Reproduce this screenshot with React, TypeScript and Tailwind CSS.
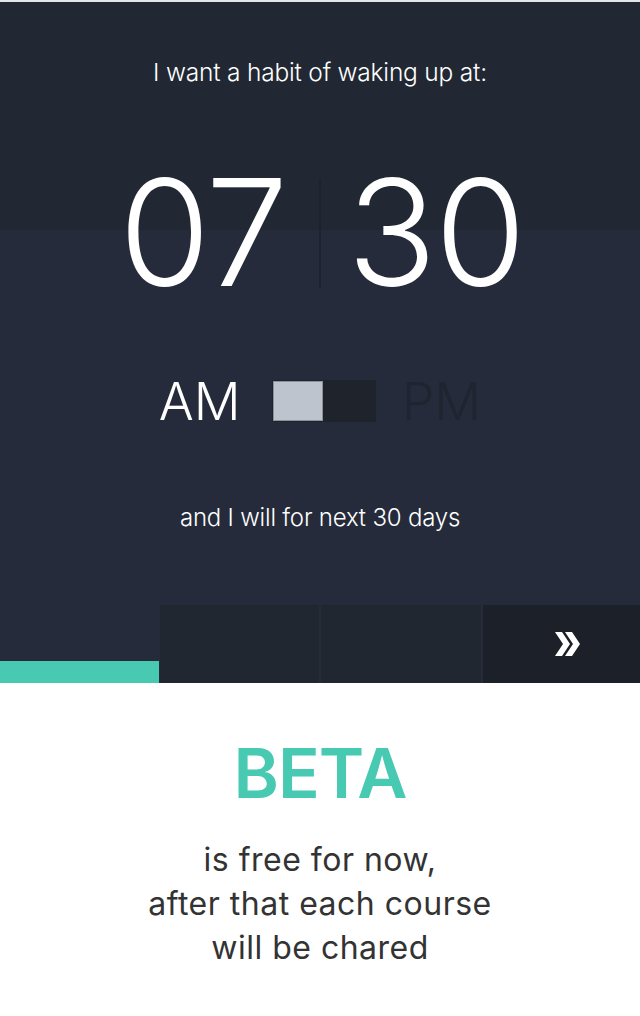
export default function App() {
  return (
    <div className="w-[640px] h-[1016px] bg-white flex flex-col font-['Inter',sans-serif]">
      <div className="h-[2px] bg-[#e4e6e9]" />

      <div className="h-[603px] flex flex-col items-center bg-[linear-gradient(to_bottom,#212833_228px,#252b3a_228px)]">
        <p className="mt-[55px] text-[24.5px] leading-[30px] font-light text-white tracking-[-0.2px]">
          I want a habit of waking up at:
        </p>

        <div className="mt-[86px] flex items-center text-white font-light">
          <span className="w-[200px] text-right pr-[36px] text-[148px] leading-[120px] tracking-[-2px]">07</span>
          <div className="w-[2px] h-[110px] bg-[#1d232c]" />
          <span className="w-[200px] text-left pl-[26px] text-[148px] leading-[120px] tracking-[-2px]">30</span>
        </div>

        <div className="mt-[81px] flex items-center">
          <span className="mt-[3px] text-[52px] leading-[50px] text-white font-light">AM</span>
          <div className="ml-[31px] w-[104px] h-[42px] bg-[#1e232c] p-[1px] flex">
            <div className="w-[50px] h-[40px] bg-[#bec4cd] border border-[#8c929b]" />
          </div>
          <span className="mt-[3px] ml-[26px] text-[52px] leading-[50px] text-[#1f2530] font-light">PM</span>
        </div>

        <p className="mt-[77px] text-[24px] leading-[28px] font-light text-white tracking-[-0.2px]">
          and I will for next 30 days
        </p>
      </div>

      <div className="h-[78px] flex bg-[#252b3a]">
        <div className="w-[160px] flex flex-col justify-end">
          <div className="w-[159px] h-[22px] bg-[#48cab2]" />
        </div>
        <div className="w-[159px] bg-[#202731]" />
        <div className="w-[2px]" />
        <div className="w-[160px] bg-[#202731]" />
        <div className="w-[2px]" />
        <div className="flex-1 bg-[#1c2129] flex items-center justify-center">
          <svg width="30" height="30" viewBox="0 0 30 30" className="ml-[12px]">
            <path d="M2 3h7l8 12-8 12H2l8-12z" fill="#ffffff" />
            <path d="M12 3h7l8 12-8 12h-7l8-12z" fill="#ffffff" />
          </svg>
        </div>
      </div>

      <div className="flex flex-col items-center">
        <h2 className="mt-[50px] text-[69px] leading-[80px] font-semibold text-[#48cab2] tracking-[-1px]">BETA</h2>
        <p className="mt-[25px] text-[32px] leading-[44px] text-[#333333] text-center tracking-[0.5px]">
          is free for now,
          <br />
          after that each course
          <br />
          will be chared
        </p>
      </div>
    </div>
  );
}
